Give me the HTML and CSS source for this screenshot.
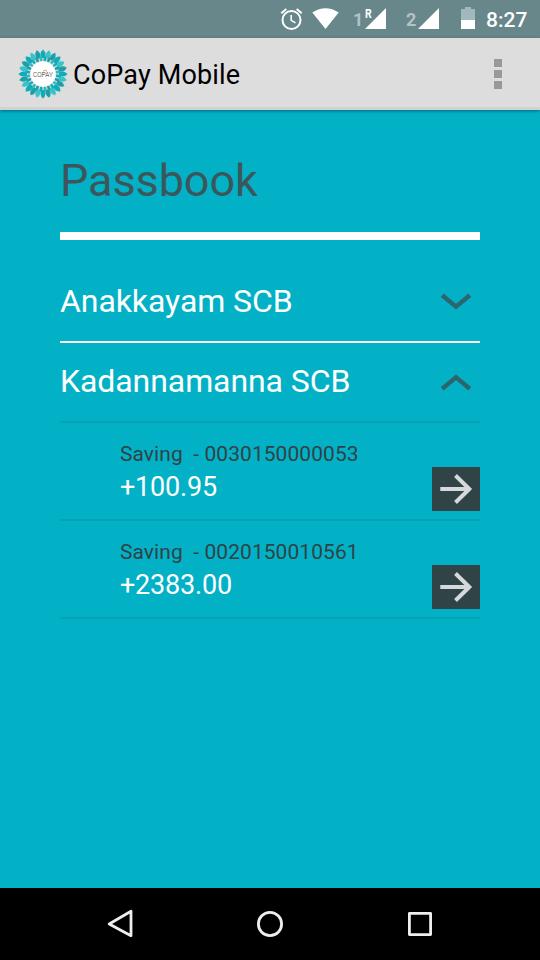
FILE: index.html
```html
<!DOCTYPE html>
<html lang="en">
<head>
  <meta charset="UTF-8" />
  <meta name="viewport" content="width=device-width, initial-scale=1.0" />
  <title>CoPay Mobile</title>
  <link rel="stylesheet" href="styles.css">
</head>
<body>

  <div class="status-bar">
    <svg class="alarm" width="24" height="24" viewBox="0 0 24 24">
      <g fill="none" stroke="#fff" stroke-width="2">
        <circle cx="11.5" cy="13" r="9" />
        <path d="M11.2 8v5.4l4.3 2.5" stroke-width="1.6" />
        <path d="M1.3 6.3l5-4.2M21.7 6.3l-5-4.2" />
      </g>
    </svg>
    <svg class="wifi" width="27" height="21" viewBox="0 0 27 21">
      <path d="M.3 4.6Q13.5 -4.2 26.7 4.6L13.5 21z" fill="#fff" />
    </svg>
    <span class="sim">1</span>
    <div class="signal">
      <span class="roaming">R</span>
      <svg width="21" height="21" viewBox="0 0 21 21"><path d="M21 0v21H0z" fill="#fff" /></svg>
    </div>
    <span class="sim sim-two">2</span>
    <div class="signal">
      <svg width="21" height="21" viewBox="0 0 21 21"><path d="M21 0v21H0z" fill="#fff" /></svg>
    </div>
    <svg class="battery" width="14" height="22" viewBox="0 0 14 22">
      <path d="M0 2h4V0h6v2h4v11H0z" fill="#a3b8bc" />
      <path d="M0 13h14v9H0z" fill="#fff" />
    </svg>
    <span class="clock">8:27</span>
  </div>

  <header>
    <svg class="logo" width="50" height="50" viewBox="-25 -25 50 50">
      <defs>
        <g id="petals">
          <path d="M0 -24.6Q4.4 -20.5 1.2 -16H-1.2Q-4.4 -20.5 0 -24.6z" fill="#12a9b8" />
          <path d="M0 -24.6Q4.4 -20.5 1.2 -16H-1.2Q-4.4 -20.5 0 -24.6z" fill="#35c4c9" transform="rotate(15)" />
          <path d="M0 -24.6Q4.4 -20.5 1.2 -16H-1.2Q-4.4 -20.5 0 -24.6z" fill="#1d9fa8" transform="rotate(30)" />
          <path d="M0 -18.3Q2.4 -16 .8 -12.5H-.8Q-2.4 -16 0 -18.3z" fill="#0faebe" transform="rotate(7.5)" />
          <path d="M0 -18.3Q2.4 -16 .8 -12.5H-.8Q-2.4 -16 0 -18.3z" fill="#239ca2" transform="rotate(22.5)" />
          <path d="M0 -18.3Q2.4 -16 .8 -12.5H-.8Q-2.4 -16 0 -18.3z" fill="#2fbac4" transform="rotate(37.5)" />
        </g>
      </defs>
      <use href="#petals" />
      <use href="#petals" transform="rotate(45)" />
      <use href="#petals" transform="rotate(90)" />
      <use href="#petals" transform="rotate(135)" />
      <use href="#petals" transform="rotate(180)" />
      <use href="#petals" transform="rotate(225)" />
      <use href="#petals" transform="rotate(270)" />
      <use href="#petals" transform="rotate(315)" />
      <circle r="12.8" fill="#fff" />
      <path d="M0 -2.6l2.2-1.4 2 1.6" fill="none" stroke="#d9a066" />
      <text class="logo-text" x="-10" y="3.2" textLength="20" lengthAdjust="spacingAndGlyphs">COPAY</text>
    </svg>
    <h1>CoPay Mobile</h1>
    <div class="menu"><i></i><i></i><i></i></div>
  </header>

  <main>
    <h2>Passbook</h2>

    <div class="bank">
      <span>Anakkayam SCB</span>
      <svg width="32" height="18" viewBox="0 0 32 18"><path d="M2.2 2.2L16 13.6 29.8 2.2" /></svg>
    </div>
    <div class="bank open">
      <span>Kadannamanna SCB</span>
      <svg width="32" height="18" viewBox="0 0 32 18"><path d="M2.2 15.8L16 4.4 29.8 15.8" /></svg>
    </div>

    <div class="account">
      <div class="details">
        <div class="number">Saving&nbsp; - 0030150000053</div>
        <div class="balance">+100.95</div>
      </div>
      <div class="go">
        <svg width="48" height="44" viewBox="0 0 48 44"><path d="M8.3 22H37M23.5 8.5L37.3 22 23.5 35.5" /></svg>
      </div>
    </div>
    <div class="account">
      <div class="details">
        <div class="number">Saving&nbsp; - 0020150010561</div>
        <div class="balance">+2383.00</div>
      </div>
      <div class="go">
        <svg width="48" height="44" viewBox="0 0 48 44"><path d="M8.3 22H37M23.5 8.5L37.3 22 23.5 35.5" /></svg>
      </div>
    </div>
  </main>

  <nav>
    <svg width="30" height="30" viewBox="0 0 30 30"><path d="M26 2.3v24.4L4.2 15z" /></svg>
    <svg width="30" height="30" viewBox="0 0 30 30"><circle cx="15" cy="15" r="11.6" /></svg>
    <svg width="30" height="30" viewBox="0 0 30 30"><rect x="4.4" y="4.4" width="21.2" height="21.2" /></svg>
  </nav>

</body>
</html>
```
FILE: styles.css
```css
:root {
  --teal: #03b1c6;
  --dark: #304347;
  --status: #67878b;
  --bar: #dddddd;
}

* {
  box-sizing: border-box;
}

body {
  margin: 0;
  height: 960px;
  display: flex;
  flex-direction: column;
  font-family: Roboto, sans-serif;
  background-color: var(--teal);
  color: #fff;
  overflow: hidden;
}

svg {
  display: block;
  flex-shrink: 0;
}

.status-bar {
  height: 38px;
  flex-shrink: 0;
  display: flex;
  align-items: flex-start;
  padding: 8px 0 0 280px;
  background-color: var(--status);
}

.alarm {
  margin-top: -1px;
}

.wifi {
  margin-left: 8px;
}

.sim {
  width: 12px;
  margin-left: 14px;
  font-size: 18px;
  font-weight: 700;
  line-height: 24px;
  color: #b3c3c5;
}

.sim-two {
  margin-left: 20px;
}

.signal {
  position: relative;
}

.roaming {
  position: absolute;
  left: 0;
  top: 0;
  font-size: 13px;
  font-weight: 700;
  line-height: 12px;
  transform: scaleX(0.8);
  transform-origin: left;
}

.battery {
  margin: -1px 0 0 22px;
}

.clock {
  margin-left: 11px;
  font-size: 21px;
  font-weight: 500;
  line-height: 24px;
}

header {
  height: 72px;
  flex-shrink: 0;
  display: flex;
  align-items: center;
  padding: 0 38px 0 18px;
  background-color: var(--bar);
  border-bottom: 3px solid #d2d2d2;
  box-shadow: 0 1px 3px rgba(0, 60, 70, 0.6);
}

.logo {
  margin-top: 2px;
}

.logo-text {
  font-size: 7px;
  font-weight: 300;
  fill: #222;
}

h1 {
  margin: 5px auto 0 5px;
  font-size: 27px;
  font-weight: 400;
  line-height: 32px;
  letter-spacing: 0.15px;
  color: #000;
}

.menu {
  display: flex;
  flex-direction: column;
  gap: 3px;
  margin-top: 3px;
}

.menu i {
  width: 8px;
  height: 8px;
  background-color: #999;
}

main {
  flex: 1;
  padding: 38px 60px 0;
}

h2 {
  margin: 0;
  height: 92px;
  font-size: 45px;
  font-weight: 400;
  line-height: 66px;
  letter-spacing: -0.1px;
  color: #3b575c;
  border-bottom: 8px solid #fff;
}

.bank {
  height: 80px;
  display: flex;
  align-items: center;
  justify-content: space-between;
  padding-right: 8px;
  font-size: 32px;
  letter-spacing: -0.08px;
  border-bottom: 2px solid #fff;
}

.bank span {
  margin-top: -3px;
}

h2 + .bank {
  margin-top: 23px;
}

.bank svg path {
  fill: none;
  stroke: #2b666e;
  stroke-width: 4.4;
}

.bank.open {
  border-bottom-color: #05a1b5;
}

.account {
  height: 98px;
  display: flex;
  justify-content: space-between;
  align-items: flex-end;
  padding: 0 0 8px 60px;
  border-bottom: 2px solid #05a1b5;
}

.details {
  height: 69px;
}

.number {
  font-size: 21px;
  line-height: 24px;
  letter-spacing: 0.06px;
  color: var(--dark);
}

.balance {
  font-size: 27px;
  line-height: 32px;
  margin-top: 5px;
  letter-spacing: -0.2px;
}

.go {
  background-color: var(--dark);
}

.go path {
  fill: none;
  stroke: #d6d9da;
  stroke-width: 4;
}

nav {
  height: 72px;
  flex-shrink: 0;
  display: flex;
  justify-content: center;
  align-items: center;
  gap: 120px;
  background-color: #000;
}

nav svg * {
  fill: none;
  stroke: #eee;
  stroke-width: 2.8;
  stroke-linejoin: round;
}
```
